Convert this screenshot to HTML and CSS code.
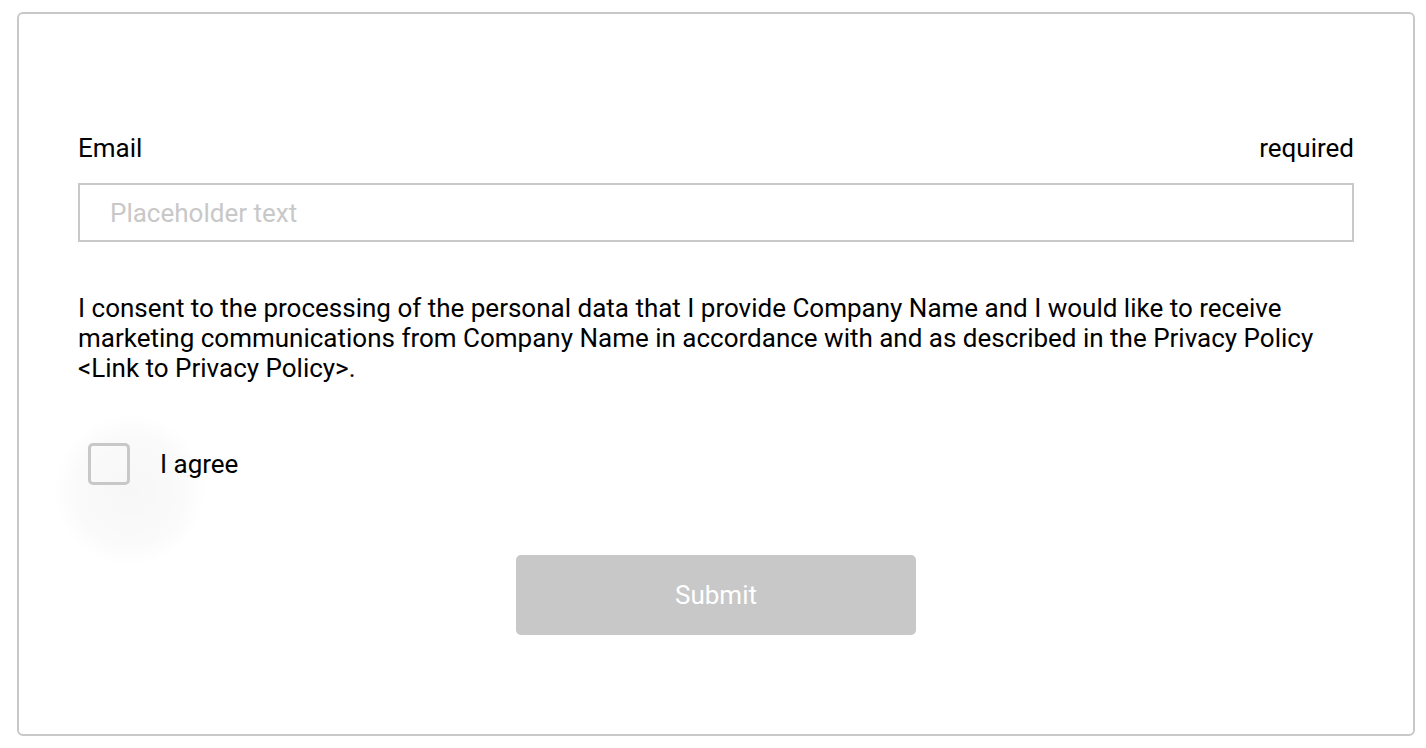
FILE: index.html
```html
<!DOCTYPE html>
<html lang="en">
<head>
<meta charset="utf-8">
<title>Consent form</title>
<link rel="stylesheet" href="styles.css">
</head>
<body>
<div class="card">
  <form class="form">
    <div class="field">
      <div class="label-row">
        <label class="label" for="email">Email</label>
        <span class="required">required</span>
      </div>
      <input class="input" id="email" type="email" placeholder="Placeholder text">
    </div>
    <p class="consent">I consent to the processing of the personal data that I provide Company Name and I would like to receive marketing communications from Company Name in accordance with and as described in the Privacy Policy &lt;Link to Privacy Policy&gt;.</p>
    <label class="check-row">
      <span class="check-wrap"><span class="ripple"></span><span class="box"></span></span>
      <span class="check-label">I agree</span>
    </label>
    <div class="actions">
      <button class="submit" type="button">Submit</button>
    </div>
  </form>
</div>
</body>
</html>
```

FILE: styles.css
```css
html, body {
  margin: 0;
  padding: 0;
  background: #ffffff;
}
body {
  font-family: Roboto, "Liberation Sans", sans-serif;
  color: #000;
  padding: 12px 11px 12px 17px;
}
.card {
  box-sizing: border-box;
  width: 1398px;
  height: 724px;
  border: 2px solid #c8c8c8;
  border-radius: 6px;
  padding: 119px 59px 0 59px;
}
.form {
  display: flex;
  flex-direction: column;
}
.label-row {
  display: flex;
  justify-content: space-between;
  align-items: baseline;
  font-size: 26px;
  line-height: 30px;
}
.input {
  display: block;
  box-sizing: border-box;
  width: 100%;
  height: 59px;
  margin-top: 20px;
  border: 2px solid #c8c8c8;
  border-radius: 0;
  padding: 0 30px;
  font-family: Roboto, "Liberation Sans", sans-serif;
  font-size: 26px;
  outline: none;
}
.input::placeholder {
  color: #c8c8c8;
}
.consent {
  margin: 51px 0 0 0;
  font-size: 26px;
  line-height: 30px;
}
.check-row {
  display: flex;
  align-items: center;
  margin-top: 60px;
  font-size: 26px;
  line-height: 30px;
}
.check-wrap {
  position: relative;
  width: 42px;
  height: 42px;
  margin-left: 10px;
}
.ripple {
  position: absolute;
  left: -35px;
  top: -30px;
  width: 154px;
  height: 154px;
  border-radius: 50%;
  background: radial-gradient(circle, rgba(0,0,0,0.03) 0%, rgba(0,0,0,0.018) 50%, rgba(0,0,0,0) 70%);
}
.box {
  position: absolute;
  inset: 0;
  box-sizing: border-box;
  border: 3px solid #c8c8c8;
  border-radius: 5px;
  background: transparent;
}
.check-label {
  margin-left: 30px;
}
.actions {
  display: flex;
  justify-content: center;
  margin-top: 70px;
}
.submit {
  width: 400px;
  height: 80px;
  border: none;
  border-radius: 5px;
  background: #c8c8c8;
  color: #ffffff;
  font-family: Roboto, "Liberation Sans", sans-serif;
  font-size: 26px;
}
```
